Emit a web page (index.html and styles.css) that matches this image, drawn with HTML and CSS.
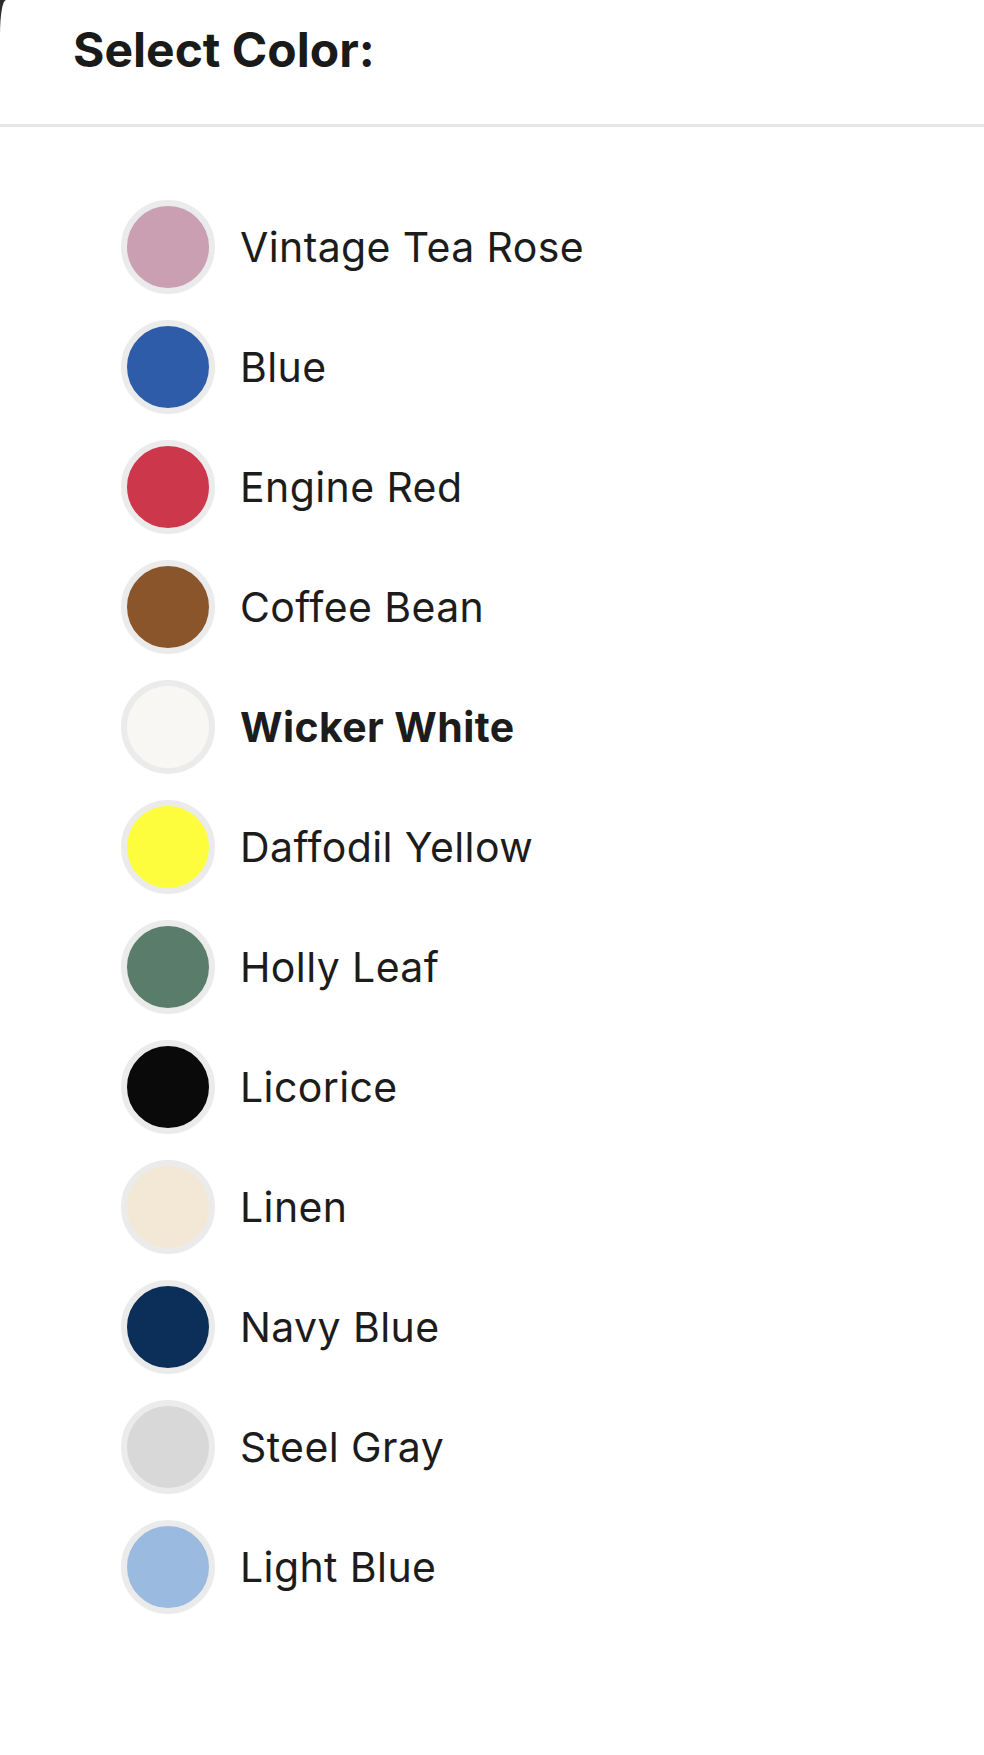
FILE: index.html
```html
<!DOCTYPE html>
<html lang="en">
<head>
    <meta charset="UTF-8">
    <meta name="viewport" content="width=device-width, initial-scale=1.0">
    <title>Select Color</title>
    <link rel="stylesheet" href="styles.css">
</head>
<body>
    <div class="sheet">
        <!-- Header -->
        <div class="sheet-header">
            <h1>Select Color:</h1>
        </div>

        <!-- Color options -->
        <ul class="color-list">
            <li class="color-option">
                <span class="swatch tea-rose"></span>
                <span class="color-name">Vintage Tea Rose</span>
            </li>
            <li class="color-option">
                <span class="swatch blue"></span>
                <span class="color-name">Blue</span>
            </li>
            <li class="color-option">
                <span class="swatch engine-red"></span>
                <span class="color-name">Engine Red</span>
            </li>
            <li class="color-option">
                <span class="swatch coffee-bean"></span>
                <span class="color-name">Coffee Bean</span>
            </li>
            <li class="color-option selected">
                <span class="swatch wicker-white"></span>
                <span class="color-name">Wicker White</span>
            </li>
            <li class="color-option">
                <span class="swatch daffodil"></span>
                <span class="color-name">Daffodil Yellow</span>
            </li>
            <li class="color-option">
                <span class="swatch holly-leaf"></span>
                <span class="color-name">Holly Leaf</span>
            </li>
            <li class="color-option">
                <span class="swatch licorice"></span>
                <span class="color-name">Licorice</span>
            </li>
            <li class="color-option">
                <span class="swatch linen"></span>
                <span class="color-name">Linen</span>
            </li>
            <li class="color-option">
                <span class="swatch navy"></span>
                <span class="color-name">Navy Blue</span>
            </li>
            <li class="color-option">
                <span class="swatch steel-gray"></span>
                <span class="color-name">Steel Gray</span>
            </li>
            <li class="color-option">
                <span class="swatch light-blue"></span>
                <span class="color-name">Light Blue</span>
            </li>
        </ul>
    </div>
</body>
</html>
```

FILE: styles.css
```css
html, body {
    margin: 0;
    padding: 0;
}

body {
    font-family: Inter, "Noto Sans", Arial, sans-serif;
    background: #2b2b2b;
    color: #1c1c1c;
    min-height: 100vh;
}

.sheet {
    background: #fff;
    min-height: 100vh;
    border-top-left-radius: 6px 34px;
}

.sheet-header {
    padding: 20px 0 44px 73px;
    border-bottom: 3px solid #e6e6e6;
}

.sheet-header h1 {
    margin: 0;
    font-size: 48px;
    line-height: 60px;
    font-weight: 700;
    color: #1a1a1a;
}

.color-list {
    list-style: none;
    margin: 0;
    padding: 60px 0 0 121px;
}

.color-option {
    display: flex;
    align-items: center;
    gap: 25px;
    height: 120px;
    cursor: pointer;
}

.swatch {
    width: 82px;
    height: 82px;
    border-radius: 50%;
    border: 6px solid #ebebeb;
    flex-shrink: 0;
}

.color-name {
    font-size: 41px;
    line-height: 48px;
    letter-spacing: 0.4px;
    font-weight: 400;
}

.selected .color-name {
    font-weight: 700;
}

/* swatch colours */
.tea-rose { background: #c99fb1; }
.blue { background: #2e5ca9; }
.engine-red { background: #cc374b; }
.coffee-bean { background: #8b552c; }
.wicker-white { background: #f8f7f3; }
.daffodil { background: #fdfd3e; }
.holly-leaf { background: #5a7d6b; }
.licorice { background: #0a0a0a; }
.linen { background: #f3e8d5; }
.navy { background: #0b2f59; }
.steel-gray { background: #d8d8d8; }
.light-blue { background: #9abbdf; }
```
